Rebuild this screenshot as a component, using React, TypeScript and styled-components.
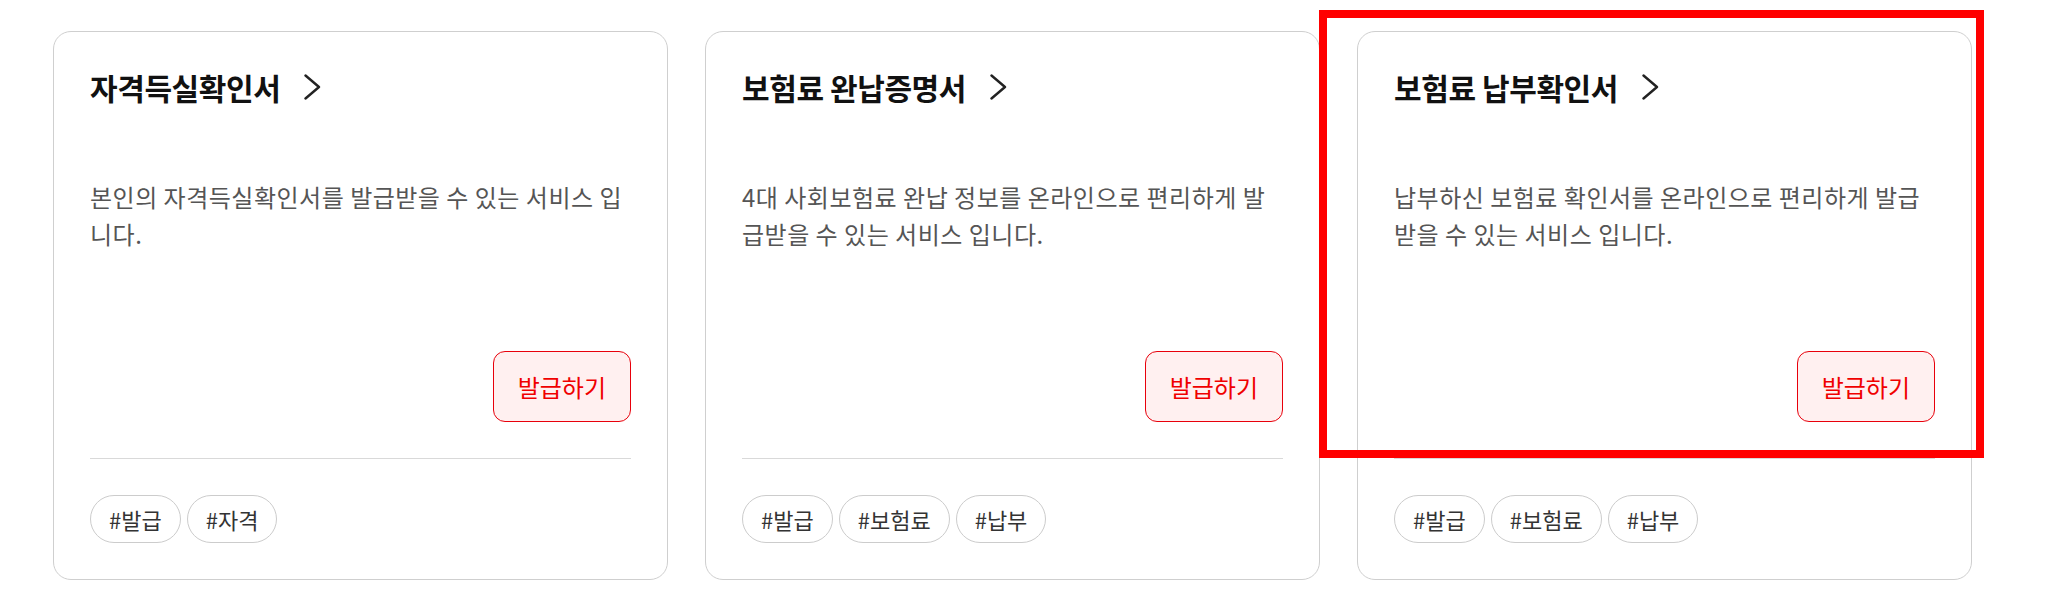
import styled, { createGlobalStyle } from 'styled-components';

const GlobalStyle = createGlobalStyle`
  html, body {
    margin: 0;
    padding: 0;
    background: #fff;
  }
  body {
    font-family: 'Noto Sans CJK KR', 'Noto Sans', sans-serif;
    color: #222;
  }
`;

const Page = styled.main`
  display: grid;
  grid-template-columns: repeat(3, 615px);
  column-gap: 37px;
  padding: 31px 0 0 53px;
`;

const Card = styled.article`
  position: relative;
  box-sizing: border-box;
  height: 549px;
  display: flex;
  flex-direction: column;
  padding: 36px;
  border: 1px solid #cfcfcf;
  border-radius: 18px;
  background: #fff;
`;

// annotation frame drawn over the selected card
const Highlight = styled.div`
  position: absolute;
  left: -39px;
  top: -22px;
  right: -13px;
  height: 448px;
  border: 8px solid #ff0000;
  box-sizing: border-box;
  pointer-events: none;
`;

const TitleRow = styled.a`
  display: flex;
  align-items: center;
  height: 38px;
  color: #111;
  text-decoration: none;
  cursor: pointer;
`;

const Title = styled.h3`
  margin: 0;
  font-size: 30px;
  font-weight: 700;
  letter-spacing: -0.4px;
  line-height: 38px;
`;

const Chevron = styled.svg`
  margin-left: 24px;
  flex-shrink: 0;
`;

const Description = styled.p`
  margin: 72px 0 0;
  font-size: 24px;
  line-height: 37px;
  letter-spacing: 0.5px;
  color: #555;
`;

const ButtonRow = styled.div`
  margin-top: auto;
  display: flex;
  justify-content: flex-end;
`;

const IssueButton = styled.button`
  height: 71px;
  padding: 0 24px;
  border: 1px solid #e8000b;
  border-radius: 12px;
  background: #fff0f0;
  color: #f00000;
  font-family: inherit;
  font-size: 24px;
  cursor: pointer;
`;

const Divider = styled.hr`
  margin: 36px 0 0;
  border: 0;
  border-top: 1px solid #d9d9d9;
`;

const TagList = styled.ul`
  display: flex;
  gap: 6px;
  margin: 36px 0 0;
  padding: 0;
  list-style: none;
`;

const Tag = styled.li`
  box-sizing: border-box;
  height: 48px;
  display: flex;
  align-items: center;
  padding: 0 18px;
  border: 1px solid #cccccc;
  border-radius: 24px;
  font-size: 22px;
  color: #333;
`;

type Service = {
  title: string;
  description: string;
  tags: string[];
  highlighted?: boolean;
};

const services: Service[] = [
  {
    title: '자격득실확인서',
    description: '본인의 자격득실확인서를 발급받을 수 있는 서비스 입니다.',
    tags: ['발급', '자격'],
  },
  {
    title: '보험료 완납증명서',
    description: '4대 사회보험료 완납 정보를 온라인으로 편리하게 발급받을 수 있는 서비스 입니다.',
    tags: ['발급', '보험료', '납부'],
  },
  {
    title: '보험료 납부확인서',
    description: '납부하신 보험료 확인서를 온라인으로 편리하게 발급받을 수 있는 서비스 입니다.',
    tags: ['발급', '보험료', '납부'],
    highlighted: true,
  },
];

export default function App() {
  return (
    <>
      <GlobalStyle />
      <Page>
        {services.map((s) => (
          <Card key={s.title}>
            <TitleRow>
              <Title>{s.title}</Title>
              <Chevron width="17" height="26" viewBox="0 0 17 26" fill="none">
                <path d="M1.5 1.5L15 13L1.5 24.5" stroke="#222" strokeWidth="2.4" strokeLinecap="round" strokeLinejoin="round" />
              </Chevron>
            </TitleRow>
            <Description>{s.description}</Description>
            <ButtonRow>
              <IssueButton>발급하기</IssueButton>
            </ButtonRow>
            <Divider />
            <TagList>
              {s.tags.map((t) => (
                <Tag key={t}>#{t}</Tag>
              ))}
            </TagList>
            {s.highlighted && <Highlight />}
          </Card>
        ))}
      </Page>
    </>
  );
}
